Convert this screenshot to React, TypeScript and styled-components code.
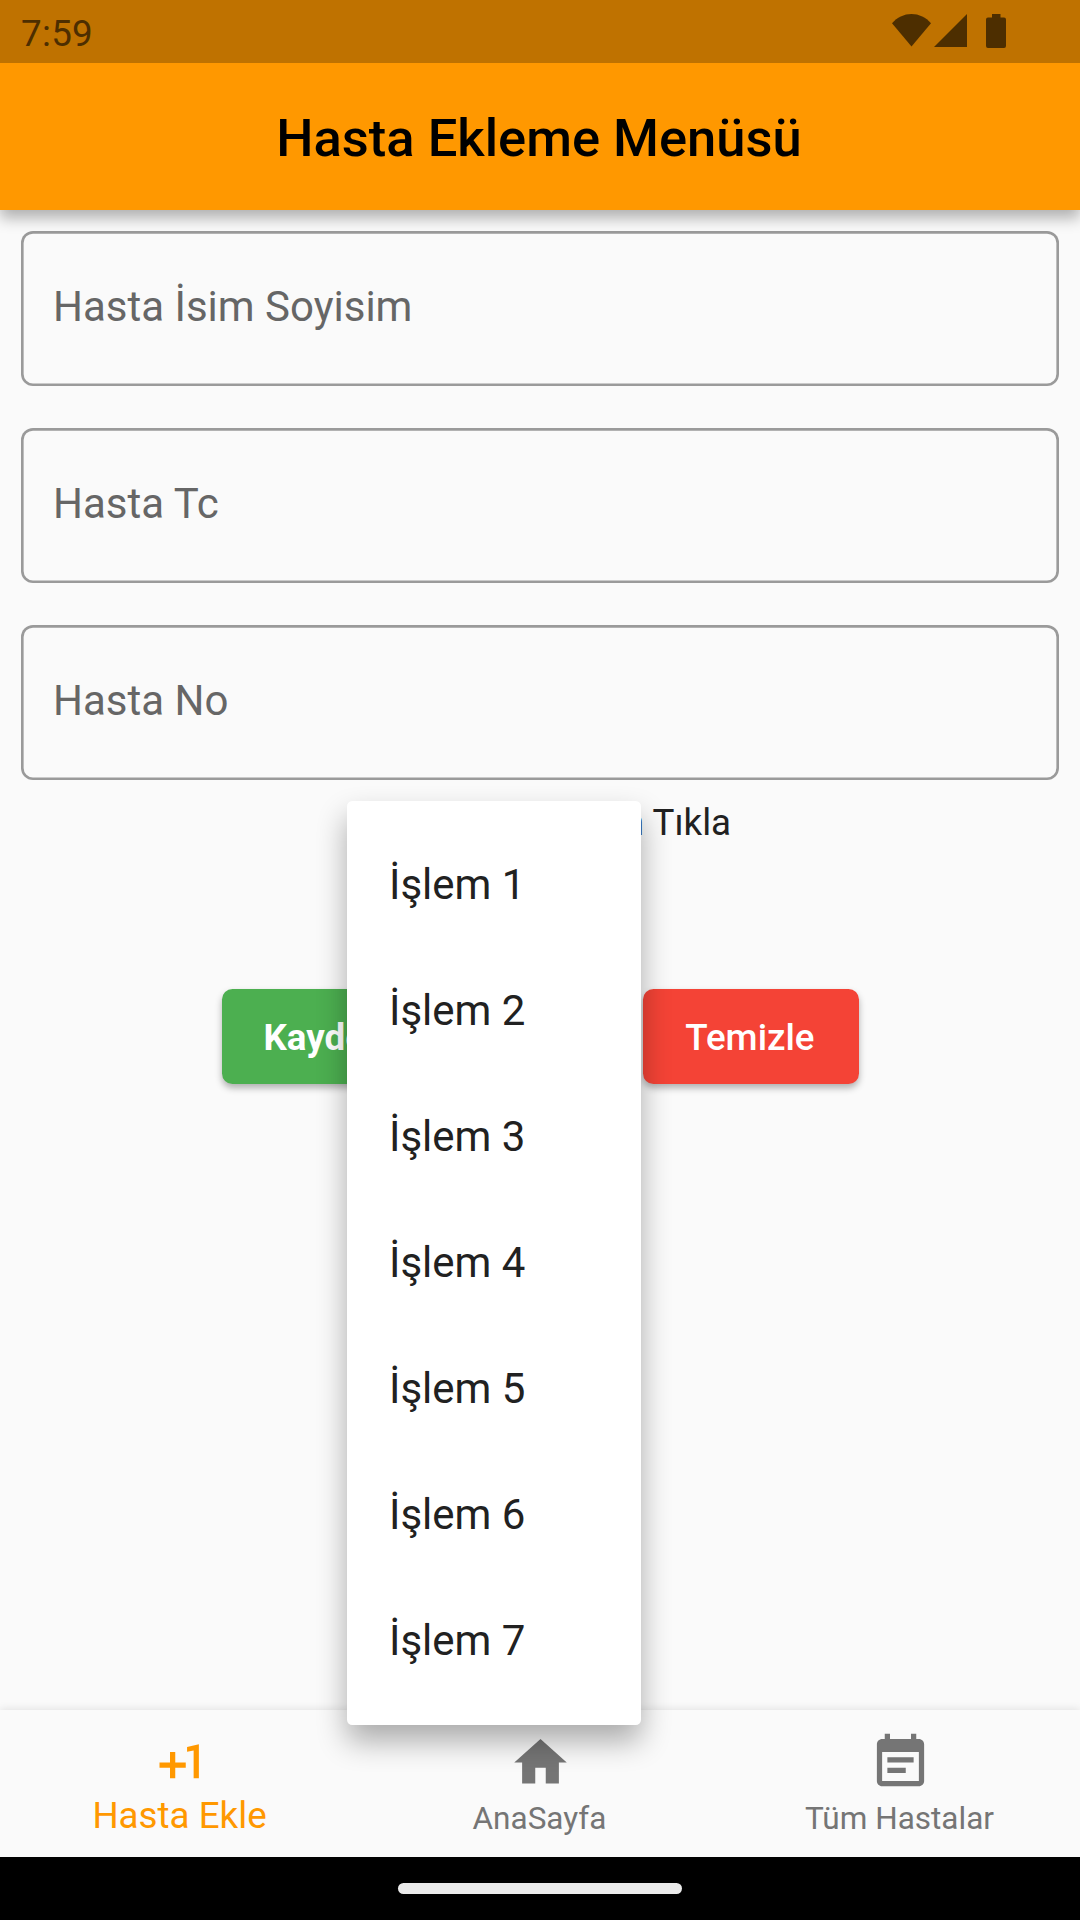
import React from "react";
import styled, { createGlobalStyle } from "styled-components";

const GlobalStyle = createGlobalStyle`
  *, *::before, *::after { box-sizing: border-box; }
  body { margin: 0; background: #fafafa; }
`;

const Screen = styled.div`
  position: relative;
  display: flex;
  flex-direction: column;
  width: 1080px;
  height: 1920px;
  overflow: hidden;
  background: #fafafa;
  color: #212121;
  font-family: Roboto, "Noto Sans", sans-serif;
`;

const StatusBar = styled.header`
  position: relative;
  z-index: 2;
  display: flex;
  flex: none;
  align-items: center;
  justify-content: space-between;
  height: 63px;
  padding: 3px 74px 0 21px;
  background: #bf7200;
  color: #4d2e00;
`;

const Clock = styled.span`
  font-size: 36.75px;
  line-height: 43px;
  letter-spacing: 0.3px;
`;

const StatusIcons = styled.div`
  display: flex;
  align-items: flex-start;
  height: 35px;
  margin-top: -4px;
`;

const StatusIcon = styled.svg<{ $gap: number }>`
  display: block;
  fill: currentColor;
  margin-left: ${(p) => p.$gap}px;
`;

const AppBar = styled.div`
  position: relative;
  z-index: 1;
  display: flex;
  flex: none;
  align-items: center;
  justify-content: center;
  height: 147px;
  padding: 2px 2px 0 0;
  background: #ff9800;
  box-shadow: 0 8px 14px rgba(0, 0, 0, 0.3);
`;

const Title = styled.h1`
  margin: 0;
  color: #000;
  font-size: 52.5px;
  font-weight: 500;
  line-height: 62px;
`;

const Body = styled.main`
  display: flex;
  flex: 1;
  flex-direction: column;
  padding: 21px 21px 0;
`;

const Form = styled.div`
  display: flex;
  flex-direction: column;
  gap: 42px;
`;

const Field = styled.label`
  display: flex;
  align-items: center;
  height: 154.875px;
  padding: 0 32px 4px;
  border-radius: 12px;
  box-shadow: inset 0 0 0 2.625px #9a9a9a;
  color: #666;
  font-size: 42px;
  line-height: 49px;
`;

const Hint = styled.p`
  margin: 21px 0 0;
  padding-right: 2px;
  text-align: center;
  font-size: 36.75px;
  line-height: 43px;
`;

const Actions = styled.div`
  display: flex;
  justify-content: space-between;
  width: 637px;
  margin: 145.5px auto 0;
`;

const Button = styled.button<{ $color: string; $weight: number; $width?: number }>`
  width: ${(p) => (p.$width ? `${p.$width}px` : "auto")};
  height: 94.5px;
  padding: 2px 42px 0;
  border: 0;
  border-radius: 10.5px;
  background: ${(p) => p.$color};
  box-shadow: 0 4px 7px rgba(0, 0, 0, 0.3);
  color: #fff;
  font-family: inherit;
  font-size: 36.75px;
  font-weight: ${(p) => p.$weight};
  line-height: 43px;
  text-align: left;
`;

const Menu = styled.ul`
  position: absolute;
  z-index: 3;
  top: 801px;
  left: 347px;
  width: 294px;
  margin: 0;
  padding: 20px 0 22px;
  border-radius: 5.25px;
  background: #fff;
  box-shadow: 0 16px 30px rgba(0, 0, 0, 0.32);
  list-style: none;
`;

const MenuItem = styled.li`
  display: flex;
  align-items: center;
  height: 126px;
  padding: 0 42px;
  font-size: 42px;
  line-height: 49px;
`;

const BottomNav = styled.nav`
  position: relative;
  z-index: 2;
  display: grid;
  flex: none;
  grid-template-columns: repeat(3, 1fr);
  height: 147px;
  background: #fafafa;
  box-shadow: 0 -1px 8px rgba(0, 0, 0, 0.1);
`;

const NavItem = styled.a<{ $active?: boolean }>`
  display: flex;
  flex-direction: column;
  align-items: center;
  padding-top: 20.5px;
  color: ${(p) => (p.$active ? "#ff9800" : "#757575")};
  font-size: ${(p) => (p.$active ? 36.75 : 31.5)}px;
  line-height: ${(p) => (p.$active ? 44 : 50)}px;
`;

const NavIcon = styled.svg`
  display: block;
  width: 63px;
  height: 63px;
  fill: currentColor;
`;

const NavLabel = styled.span`
  padding-right: 1px;
`;

const GestureBar = styled.footer`
  display: flex;
  flex: none;
  align-items: center;
  justify-content: center;
  height: 63px;
  background: #000;
`;

const Pill = styled.div`
  width: 284px;
  height: 10.5px;
  border-radius: 6px;
  background: #ebebeb;
`;

const fields = ["Hasta İsim Soyisim", "Hasta Tc", "Hasta No"];
const operations = [1, 2, 3, 4, 5, 6, 7].map((n) => `İşlem ${n}`);

const tabs = [
  {
    label: "Hasta Ekle",
    active: true,
    path: "M10 8H8v4H4v2h4v4h2v-4h4v-2h-4zm4.5-1.92V7.9l2.5-.5V18h2V5z",
  },
  { label: "AnaSayfa", path: "M10 20v-6h4v6h5v-8h3L12 3 2 12h3v8z" },
  {
    label: "Tüm Hastalar",
    path: "M17 10H7v2h10v-2zm2-7h-1V1h-2v2H8V1H6v2H5c-1.11 0-1.99.9-1.99 2L3 19c0 1.1.89 2 2 2h14c1.1 0 2-.9 2-2V5c0-1.1-.9-2-2-2zm0 16H5V8h14v11zm-5-5H7v2h7v-2z",
  },
];

export default function App() {
  return (
    <>
      <GlobalStyle />
      <Screen>
        <StatusBar>
          <Clock>7:59</Clock>
          <StatusIcons>
            <StatusIcon $gap={0} width="39" height="33" viewBox="0 0 39 33">
              <path d="M0 9.3C5 3.4 12 0 19.5 0S34 3.4 39 9.3L19.5 32.6z" />
            </StatusIcon>
            <StatusIcon $gap={3} width="33" height="33" viewBox="0 0 33 33">
              <path d="M0 33L33 0v33z" />
            </StatusIcon>
            <StatusIcon $gap={19} width="20" height="34" viewBox="0 0 20 34">
              <path d="M6 0h8.500v3.500H18a2 2 0 0 1 2 2V32a2 2 0 0 1-2 2H2a2 2 0 0 1-2-2V5.500a2 2 0 0 1 2-2h4z" />
            </StatusIcon>
          </StatusIcons>
        </StatusBar>
        <AppBar>
          <Title>Hasta Ekleme Menüsü</Title>
        </AppBar>
        <Body>
          <Form>
            {fields.map((label) => (
              <Field key={label}>{label}</Field>
            ))}
          </Form>
          <Hint>İşlem Seçmek İçin Tıkla</Hint>
          <Actions>
            <Button $color="#4caf50" $weight={700}>Kaydet</Button>
            <Button $color="#f44336" $weight={500} $width={215.25}>Temizle</Button>
          </Actions>
        </Body>
        <BottomNav>
          {tabs.map((tab) => (
            <NavItem key={tab.label} $active={tab.active}>
              <NavIcon viewBox="0 0 24 24">
                <path d={tab.path} />
              </NavIcon>
              <NavLabel>{tab.label}</NavLabel>
            </NavItem>
          ))}
        </BottomNav>
        <GestureBar>
          <Pill />
        </GestureBar>
        <Menu>
          {operations.map((name) => (
            <MenuItem key={name}>{name}</MenuItem>
          ))}
        </Menu>
      </Screen>
    </>
  );
}
